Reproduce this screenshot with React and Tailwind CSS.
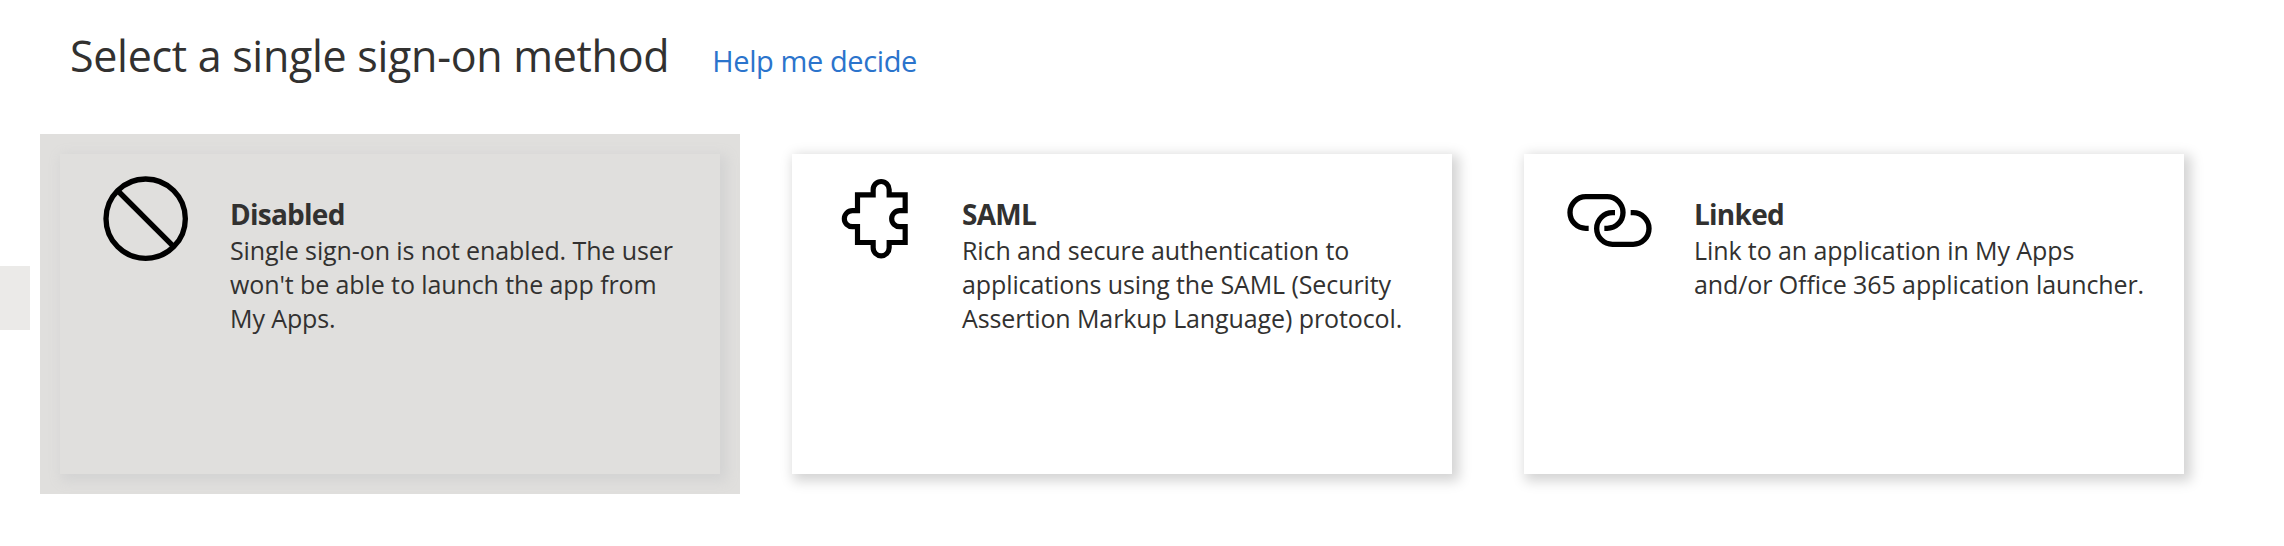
const DisabledIcon = () => (
  <svg className="h-[86px] w-[86px] shrink-0" viewBox="69 78 258 258" fill="none" stroke="#000" strokeWidth="16">
    <circle cx="197" cy="206" r="119" />
    <path d="M114 123L281 290" />
  </svg>
);

const PuzzleIcon = () => (
  <svg className="h-[86px] w-[86px] shrink-0" viewBox="45 48 258 258" fill="none" stroke="#000" strokeWidth="15.5">
    <path d="M112.5 104.5H159.5V88.5a24 24 0 0 1 48 0V104.5H255.5V152H239a24 24 0 0 0 0 48H255.5V247.5H207.5V263.5a24 24 0 0 1-48 0V247.5H112.5V200H97a24 24 0 0 1 0-48H112.5Z" />
  </svg>
);

const LinkIcon = () => (
  <svg className="h-[86px] w-[86px] shrink-0" viewBox="51 18 258 258" fill="none" stroke="#000" strokeWidth="16">
    <path d="M116 175H107.5a47.5 47.5 0 0 1 0-95H171.5a47.5 47.5 0 0 1 0 95H163" />
    <path d="M195 128H187.5a47.5 47.5 0 0 0 0 95H249.5a47.5 47.5 0 0 0 0-95H242" />
  </svg>
);

const methods = [
  {
    title: 'Disabled',
    lines: ['Single sign-on is not enabled. The user', "won't be able to launch the app from", 'My Apps.'],
    Icon: DisabledIcon,
    selected: true,
  },
  {
    title: 'SAML',
    lines: ['Rich and secure authentication to', 'applications using the SAML (Security', 'Assertion Markup Language) protocol.'],
    Icon: PuzzleIcon,
  },
  {
    title: 'Linked',
    lines: ['Link to an application in My Apps', 'and/or Office 365 application launcher.'],
    Icon: LinkIcon,
  },
];

const MethodCard = ({ title, lines, Icon, selected }) => (
  <div className={`h-[360px] w-[700px] shrink-0 p-5 ${selected ? 'overflow-hidden bg-[#e0dfdd]' : ''}`}>
    <div className={`flex h-full gap-[41px] pl-[43px] pt-[22px] shadow-[4px_4px_12px_3px_#d3d3d3] ${selected ? 'bg-[#e0dfdd]' : 'bg-white'}`}>
      <Icon />
      <div className="pt-[19px] whitespace-nowrap text-[#323130]">
        <h2 className="text-[28px] leading-[38px] font-bold tracking-[-0.75px]">{title}</h2>
        <p className="text-[25px] leading-[34px] tracking-[-0.1px]">
          {lines.map((line) => (
            <span key={line} className="block">{line}</span>
          ))}
        </p>
      </div>
    </div>
  </div>
);

export default function App() {
  return (
    <div className="flex h-[546px] w-[2284px] overflow-hidden bg-white font-['Open_Sans','Noto_Sans',sans-serif]">
      <div className="mt-[266px] h-16 w-[30px] shrink-0 bg-[#ebeae8]" />
      <main className="pl-[10px]">
        <header className="flex h-[134px] items-baseline gap-[43px] pl-[30px] pt-[26px] whitespace-nowrap">
          <h1 className="text-[43px] leading-[60px] tracking-[-0.3px] text-[#323130]">Select a single sign-on method</h1>
          <a href="#" className="text-[29px] tracking-[-0.4px] text-[#2b74cc]">Help me decide</a>
        </header>
        <div className="flex gap-8">
          {methods.map((method) => (
            <MethodCard key={method.title} {...method} />
          ))}
        </div>
      </main>
    </div>
  );
}
